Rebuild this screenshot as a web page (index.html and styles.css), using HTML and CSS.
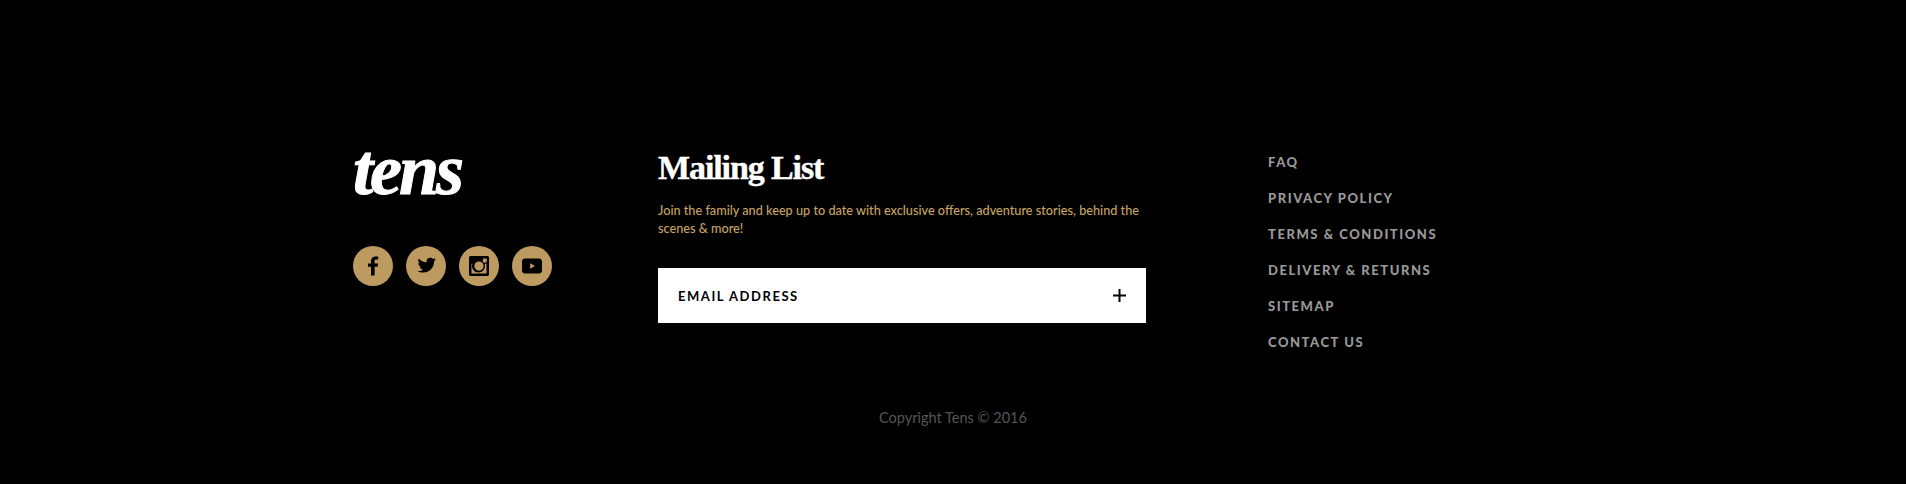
FILE: index.html
```html
<!DOCTYPE html>
<html>
   <head>
      <title>Tens</title>
      <link rel="stylesheet" href="styles.css">
   </head>
   <body>
      <footer class="footer">
         <div class="columns">
            <div class="brand">
               <div class="logo">tens</div>
               <div class="social">
                  <a class="social-icon" href="#">
                     <svg viewBox="0 0 40 40" width="40" height="40"><path d="M21.600 29.500V20.800h3l.5-3.400h-3.500v-2.100c0-1 .3-1.700 1.700-1.700h1.900v-3c-.4-.1-1.500-.2-2.700-.2-2.700 0-4.500 1.600-4.500 4.600v2.400h-3v3.400h3v8.700z"/></svg>
                  </a>
                  <a class="social-icon" href="#">
                     <svg viewBox="0 0 40 40" width="40" height="40"><path d="M30 13.500c-.7.300-1.500.5-2.200.6.800-.5 1.400-1.200 1.700-2.100-.7.400-1.600.8-2.400.9-.7-.7-1.700-1.200-2.800-1.200-2.100 0-3.800 1.700-3.800 3.800 0 .3 0 .6.100.9-3.200-.2-6-1.700-7.900-4-.3.600-.5 1.200-.5 1.900 0 1.300.7 2.500 1.700 3.200-.6 0-1.200-.2-1.700-.5v.1c0 1.800 1.300 3.400 3.100 3.700-.3.100-.7.100-1 .1-.2 0-.5 0-.7-.1.500 1.500 1.900 2.600 3.500 2.600-1.300 1-2.900 1.600-4.700 1.600-.3 0-.6 0-.9-.1 1.700 1.100 3.700 1.700 5.800 1.700 7 0 10.800-5.800 10.800-10.800v-.5c.8-.5 1.400-1.200 1.900-1.900z"/></svg>
                  </a>
                  <a class="social-icon" href="#">
                     <svg viewBox="0 0 40 40" width="40" height="40"><path fill-rule="evenodd" d="M11.500 10h17c.8 0 1.500.7 1.500 1.500v17c0 .8-.7 1.500-1.500 1.500h-17c-.8 0-1.500-.7-1.500-1.500v-17c0-.8.7-1.500 1.500-1.500zm13 2.500c-.4 0-.7.300-.7.700v2.600c0 .4.300.7.700.7h2.600c.4 0 .7-.3.700-.7v-2.600c0-.4-.3-.7-.7-.7zM20 15.500a4.600 4.600 0 1 0 0 9.200 4.600 4.600 0 0 0 0-9.200zm-7.500 2.300v9.100c0 .4.300.7.700.7h13.600c.4 0 .7-.3.700-.7v-9.100h-1.800c.2.700.3 1.400.3 2.200 0 3.600-2.900 6.500-6.500 6.500s-6.500-2.900-6.500-6.500c0-.8.100-1.500.3-2.200z"/></svg>
                  </a>
                  <a class="social-icon" href="#">
                     <svg viewBox="0 0 40 40" width="40" height="40"><path fill-rule="evenodd" d="M13 12.500h14c1.700 0 3 1.300 3 3v9c0 1.700-1.300 3-3 3H13c-1.700 0-3-1.300-3-3v-9c0-1.700 1.300-3 3-3zm5.200 4.700v5.600l4.800-2.800z"/></svg>
                  </a>
               </div>
            </div>
            <div class="mailing">
               <h2 class="mailing-title">Mailing List</h2>
               <p class="mailing-text">Join the family and keep up to date with exclusive offers, adventure stories, behind the scenes &amp; more!</p>
               <div class="email-box">
                  <span class="email-label">EMAIL ADDRESS</span>
                  <svg class="email-plus" viewBox="0 0 13 13" width="13" height="13"><path d="M6.500 0v13M0 6.500h13" stroke="#000" stroke-width="2" fill="none"/></svg>
               </div>
            </div>
            <ul class="links">
               <li><a href="#">FAQ</a></li>
               <li><a href="#">PRIVACY POLICY</a></li>
               <li><a href="#">TERMS &amp; CONDITIONS</a></li>
               <li><a href="#">DELIVERY &amp; RETURNS</a></li>
               <li><a href="#">SITEMAP</a></li>
               <li><a href="#">CONTACT US</a></li>
            </ul>
         </div>
         <p class="copyright">Copyright Tens © 2016</p>
      </footer>
   </body>
</html>
```

FILE: styles.css
```css
html, body {
   margin: 0;
   height: 484px;
   overflow: hidden;
   background: #000;
   font-family: Lato, "Open Sans", sans-serif;
}
.footer {
   padding-top: 140px;
}
.columns {
   width: 1200px;
   margin: 0 auto;
   display: grid;
   grid-template-columns: 305px 610px 285px;
   height: 266px;
}
.logo {
   font-family: "Liberation Serif", serif;
   font-style: italic;
   font-weight: bold;
   font-size: 72px;
   line-height: 60px;
   letter-spacing: -3px;
   color: #fff;
   height: 66px;
   -webkit-text-stroke: 1px #fff;
}
.social {
   display: flex;
   gap: 13px;
   margin-top: 40px;
}
.social-icon {
   display: block;
   width: 40px;
   height: 40px;
   border-radius: 50%;
   background: #bd9b60;
}
.social-icon svg {
   display: block;
   fill: #000;
}
.mailing-title {
   margin: 8px 0 0;
   font-family: "Liberation Serif", serif;
   font-weight: bold;
   font-size: 34px;
   line-height: 40px;
   letter-spacing: -1.1px;
   color: #fff;
   -webkit-text-stroke: 0.4px #fff;
}
.mailing-text {
   width: 488px;
   margin: 13px 0 0;
   font-size: 12.7px;
   font-weight: 500;
   line-height: 18px;
   color: #c6a365;
}
.email-box {
   width: 488px;
   height: 55px;
   margin-top: 31px;
   padding: 0 20px;
   box-sizing: border-box;
   display: flex;
   align-items: center;
   justify-content: space-between;
   background: #fff;
}
.email-label {
   font-size: 13px;
   font-weight: bold;
   letter-spacing: 1.55px;
   color: #000;
}
.links {
   list-style: none;
   margin: 0;
   padding: 12px 0 0;
}
.links li {
   height: 36px;
   line-height: 18px;
}
.links a {
   font-size: 13px;
   font-weight: 900;
   letter-spacing: 1.55px;
   color: #999;
   text-decoration: none;
}
.copyright {
   margin: 0;
   padding-top: 3px;
   text-align: center;
   font-size: 14.5px;
   line-height: 18px;
   color: #555;
}
```
